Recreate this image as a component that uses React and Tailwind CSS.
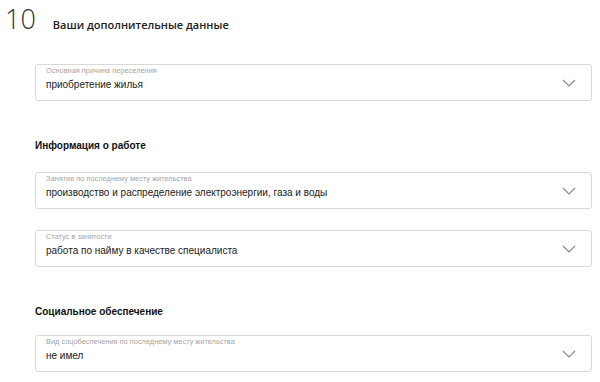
function Chevron() {
  return (
    <svg width="14" height="8" viewBox="0 0 14 8" fill="none" className="shrink-0">
      <path d="M1 1l6 6 6-6" stroke="#8a8a8a" strokeWidth="1.2" />
    </svg>
  );
}

function SelectField({ label, value }) {
  return (
    <div className="flex items-center h-[37px] border border-[#d9d9d9] rounded-[3px] pl-[10px] pr-[15px]">
      <div className="flex-1 flex flex-col self-start pt-[1px]">
        <span className="text-[7.4px] leading-[10px] text-[#a5a5a5]">{label}</span>
        <span className="text-[10px] leading-[13px] text-[#222] mt-[2px]">{value}</span>
      </div>
      <Chevron />
    </div>
  );
}

export default function App() {
  return (
    <div className="w-[600px] h-[382px] bg-white overflow-hidden font-['Liberation_Sans',Arial,sans-serif]">
      <div className="flex items-baseline pl-[5px] h-[33px]">
        <span className="text-[27px] leading-[37px] font-light text-[#333] font-['Open_Sans',sans-serif]">10</span>
        <span className="ml-[17px] text-[11px] font-semibold text-[#222] font-['Open_Sans',sans-serif]">Ваши дополнительные данные</span>
      </div>

      <div className="pl-[35px] pr-[8px]">
        <div className="mt-[31px]">
          <SelectField label="Основная причина переселения" value="приобретение жилья" />
        </div>

        <h3 className="mt-[37px] text-[10px] leading-[15px] font-bold text-[#111]">Информация о работе</h3>

        <div className="mt-[19px] flex flex-col gap-[21px]">
          <SelectField
            label="Занятие по последнему месту жительства"
            value="производство и распределение электроэнергии, газа и воды"
          />
          <SelectField label="Статус в занятости" value="работа по найму в качестве специалиста" />
        </div>

        <h3 className="mt-[37px] text-[10px] leading-[15px] font-bold text-[#111]">Социальное обеспечение</h3>

        <div className="mt-[16px]">
          <SelectField label="Вид соцобеспечения по последнему месту жительства" value="не имел" />
        </div>
      </div>
    </div>
  );
}
